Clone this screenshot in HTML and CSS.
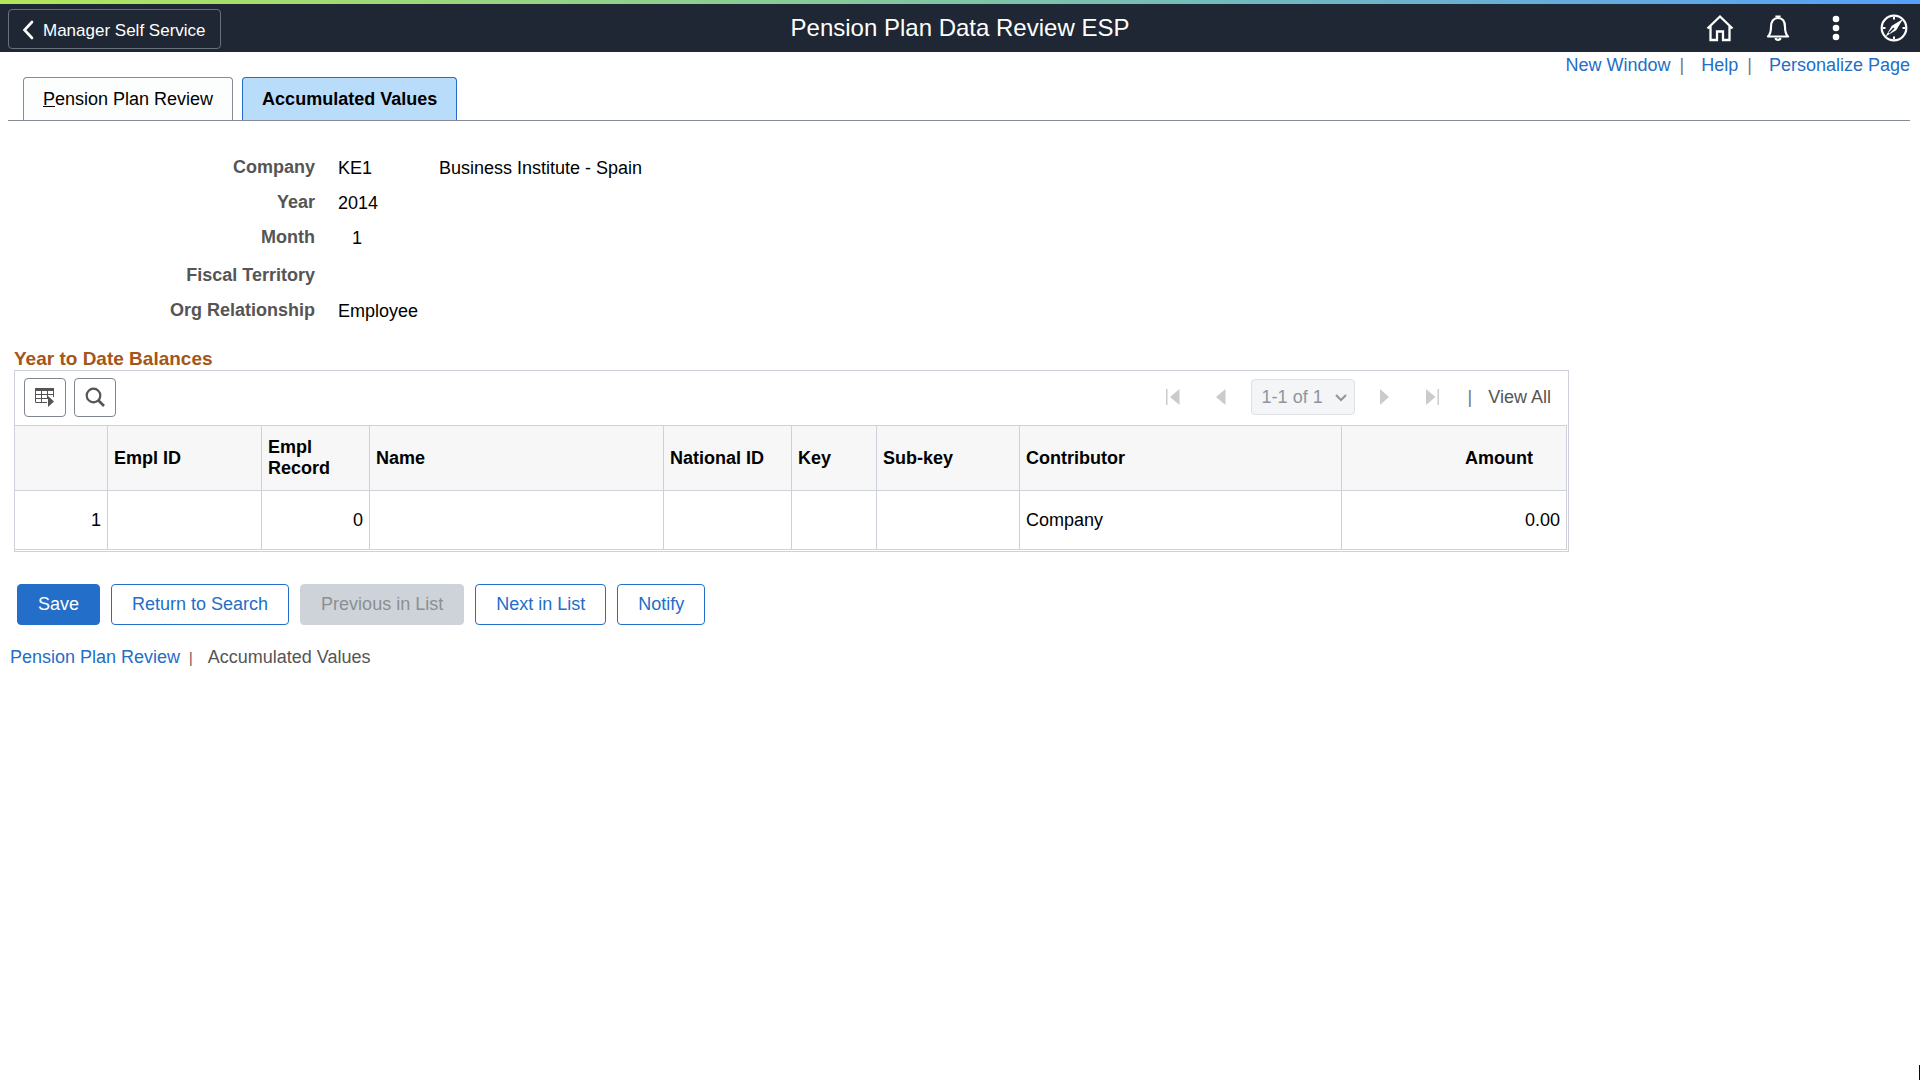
FILE: index.html
```html
<!DOCTYPE html>
<html lang="en">
<head>
    <meta charset="UTF-8">
    <meta name="viewport" content="width=device-width, initial-scale=1.0">
    <title>Pension Plan Data Review ESP</title>
    <link rel="stylesheet" href="styles.css">
</head>
<body>
    <header class="banner">
        <div class="banner-left">
            <button class="back-btn" type="button">
                <svg width="12" height="20" viewBox="0 0 12 20"><path d="M10 2 2.500 10 10 18" fill="none" stroke="#fff" stroke-width="2.600" stroke-linecap="round"/></svg>
                Manager Self Service
            </button>
        </div>
        <h1>Pension Plan Data Review ESP</h1>
        <div class="banner-icons">
            <button class="icon-btn" type="button" aria-label="Home">
                <svg width="28" height="28" viewBox="0 0 28 28" fill="none" stroke="#fff" stroke-width="2.300"><path d="M1.500 14.500 14 2.500l12.500 12M4.500 12v14h6.500v-8.500h6V26h6.500V12"/></svg>
            </button>
            <button class="icon-btn" type="button" aria-label="Notifications">
                <svg width="28" height="28" viewBox="0 0 28 28" fill="none" stroke="#fff" stroke-width="2.200"><path d="M4 22.500c2.500-2.500 3-5 3-9.500 0-5.500 2.500-9 7-9s7 3.500 7 9c0 4.500.5 7 3 9.500z" stroke-linejoin="round"/><path d="M12.500 3.500v-1h3v1M11.500 24c.5 2.500 4.500 2.500 5 0"/></svg>
            </button>
            <button class="icon-btn" type="button" aria-label="Actions">
                <svg width="28" height="28" viewBox="0 0 28 28" fill="#fff"><circle cx="14" cy="5" r="3.300"/><circle cx="14" cy="14" r="3.300"/><circle cx="14" cy="23" r="3.300"/></svg>
            </button>
            <button class="icon-btn" type="button" aria-label="Navigator">
                <svg width="28" height="28" viewBox="0 0 28 28" fill="none" stroke="#fff"><circle cx="14" cy="14" r="12.300" stroke-width="2.200"/><path d="M23 5 11.800 11.800 5.500 22.500l10.700-6.300z" fill="#fff" stroke="none"/><path d="M14 14 9 19" stroke="#1e2733" stroke-width="1.500"/><path d="M14 3v2.500M14 22.500V25M3 14h2.500M22.500 14H25" stroke-width="2"/></svg>
            </button>
        </div>
    </header>

    <nav class="page-links">
        <a href="#">New Window</a>
        <span class="bar">|</span>
        <a href="#">Help</a>
        <span class="bar">|</span>
        <a href="#">Personalize Page</a>
    </nav>

    <nav class="tabs">
        <a class="tab" href="#"><u>P</u>ension Plan Review</a>
        <a class="tab active" href="#">Accumulated Values</a>
    </nav>

    <main>
        <dl class="fields">
            <dt>Company</dt>
            <dd>KE1</dd>
            <dd>Business Institute - Spain</dd>
            <dt>Year</dt>
            <dd>2014</dd>
            <dt>Month</dt>
            <dd class="month">1</dd>
            <dt class="spaced">Fiscal Territory</dt>
            <dd class="spaced"></dd>
            <dt>Org Relationship</dt>
            <dd>Employee</dd>
        </dl>

        <h2>Year to Date Balances</h2>
        <section class="grid">
            <div class="grid-bar">
                <button class="tool-btn" type="button" aria-label="Grid actions">
                    <svg width="20" height="20" viewBox="0 0 20 20"><path d="M0 1h19v3H0z" fill="#555"/><path d="M.5 4v11.500H12M.5 7.500h18M.5 11.500H13M6.500 4v11.500M12.500 4v8M18.500 4v6" fill="none" stroke="#555"/><path d="M13 9v11l6-5.500z" fill="#555"/></svg>
                </button>
                <button class="tool-btn" type="button" aria-label="Find">
                    <svg width="20" height="20" viewBox="0 0 20 20" fill="none" stroke="#555"><circle cx="8.500" cy="8.500" r="6.800" stroke-width="2.200"/><path d="m13.500 13.500 5.500 5.500" stroke-width="2.600"/></svg>
                </button>
                <div class="pager">
                    <button class="page-btn" type="button" aria-label="First" disabled>
                        <svg width="14" height="16" viewBox="0 0 14 16"><path d="M0 0h1.500v16H0zM13.500 0v16L4 8z"/></svg>
                    </button>
                    <button class="page-btn" type="button" aria-label="Previous" disabled>
                        <svg width="10" height="16" viewBox="0 0 10 16"><path d="M9.500 0v16L0 8z"/></svg>
                    </button>
                    <div class="rows-select">
                        <select aria-label="Rows" disabled>
                            <option>1-1 of 1</option>
                        </select>
                        <svg width="12" height="8" viewBox="0 0 12 8"><path d="M1 1l5 5 5-5" fill="none" stroke="#8f959d" stroke-width="2"/></svg>
                    </div>
                    <button class="page-btn" type="button" aria-label="Next" disabled>
                        <svg width="10" height="16" viewBox="0 0 10 16"><path d="M0 0v16l9-8z"/></svg>
                    </button>
                    <button class="page-btn" type="button" aria-label="Last" disabled>
                        <svg width="14" height="16" viewBox="0 0 14 16"><path d="M0 0v16l9.500-8zM11.500 0H13v16h-1.500z"/></svg>
                    </button>
                    <span class="bar">|</span>
                    <a class="view-all" href="#">View All</a>
                </div>
            </div>
            <table>
                <colgroup>
                    <col class="c-row">
                    <col class="c-id">
                    <col class="c-record">
                    <col class="c-name">
                    <col class="c-national">
                    <col class="c-key">
                    <col class="c-subkey">
                    <col class="c-contrib">
                    <col class="c-amount">
                </colgroup>
                <thead>
                    <tr>
                        <th></th>
                        <th>Empl ID</th>
                        <th>Empl<br>Record</th>
                        <th>Name</th>
                        <th>National ID</th>
                        <th>Key</th>
                        <th>Sub-key</th>
                        <th>Contributor</th>
                        <th class="amount">Amount</th>
                    </tr>
                </thead>
                <tbody>
                    <tr>
                        <td class="num">1</td>
                        <td></td>
                        <td class="num">0</td>
                        <td></td>
                        <td></td>
                        <td></td>
                        <td></td>
                        <td>Company</td>
                        <td class="num">0.00</td>
                    </tr>
                </tbody>
            </table>
        </section>

        <div class="actions">
            <button class="btn primary" type="button">Save</button>
            <button class="btn" type="button">Return to Search</button>
            <button class="btn" type="button" disabled>Previous in List</button>
            <button class="btn" type="button">Next in List</button>
            <button class="btn" type="button">Notify</button>
        </div>

        <nav class="bottom-links">
            <a href="#">Pension Plan Review</a>
            <span class="small-bar">|</span>
            <span>Accumulated Values</span>
        </nav>
    </main>
    <div class="edge"></div>
</body>
</html>
```

FILE: styles.css
```css
* {
    box-sizing: border-box;
}
body {
    font-family: "Liberation Sans", Arial, sans-serif;
    font-size: 18px;
    line-height: 21px;
    color: #000;
    background-color: #fff;
    margin: 0;
}
button, select {
    font: inherit;
}
a {
    color: #226ec8;
    text-decoration: none;
}
svg {
    display: block;
}

/* Banner */
.banner {
    display: grid;
    grid-template-columns: 1fr auto 1fr;
    align-items: center;
    height: 52px;
    padding: 4px 8px 0;
    color: #fff;
    background: linear-gradient(to right, #b3e65a, #7fc4a4 50%, #56a0fa) top / 100% 4px no-repeat #1e2733;
}
.banner h1 {
    margin: 0;
    font-size: 24px;
    font-weight: normal;
    line-height: 28px;
}
.back-btn {
    display: flex;
    align-items: center;
    gap: 9px;
    height: 40px;
    margin-top: 2px;
    padding: 2px 14px 0 13px;
    font-size: 17px;
    color: #fff;
    background: none;
    border: 1px solid #67707d;
    border-radius: 4px;
    cursor: pointer;
}
.banner-icons {
    display: flex;
    justify-content: flex-end;
    gap: 30px;
    padding-right: 4px;
}
.icon-btn {
    padding: 0;
    background: none;
    border: none;
    cursor: pointer;
}

/* Links under the banner */
.page-links {
    display: flex;
    justify-content: flex-end;
    gap: 9px;
    padding: 3px 10px 0;
}
.page-links .bar {
    margin-right: 8px;
}
.bar {
    color: #6f7882;
}

/* Tabs */
.tabs {
    display: flex;
    gap: 9px;
    margin: 1px 10px 0 8px;
    padding-left: 15px;
    border-bottom: 1px solid #858c94;
}
.tab {
    height: 43px;
    padding: 11px 19px;
    color: #000;
    background-color: #fcfefd;
    border: 1px solid #858c94;
    border-bottom: none;
    border-radius: 4px 4px 0 0;
}
.tab.active {
    font-weight: bold;
    background-color: #badcfb;
    border-color: #226ec8;
}

main {
    padding: 36px 14px 0;
}

/* Header fields */
.fields {
    display: grid;
    grid-template-columns: 301px 78px auto;
    column-gap: 23px;
    row-gap: 14px;
    margin: 0 0 26px;
}
.fields dt {
    grid-column: 1;
    text-align: right;
    font-weight: bold;
    color: #555;
}
.fields dd {
    margin: 0;
    padding-top: 1px;
    height: 21px;
}
.fields .month {
    padding-left: 14px;
}
.fields .spaced {
    margin-top: 3px;
}

/* Balances grid */
h2 {
    margin: 0;
    font-size: 19px;
    line-height: 23px;
    color: #a55516;
}
.grid {
    width: fit-content;
    padding: 0 1px 1px 0;
    border: 1px solid #cdd2da;
}
.grid-bar {
    display: flex;
    gap: 8px;
    padding: 7px 16px 8px 9px;
}
.tool-btn {
    display: flex;
    justify-content: center;
    width: 42px;
    height: 39px;
    padding: 8px 0;
    background-color: #fff;
    border: 1px solid #7f868f;
    border-radius: 4px;
    cursor: pointer;
}
.pager {
    display: flex;
    align-items: center;
    margin-left: auto;
    height: 38px;
}
.page-btn {
    padding: 0;
    margin-right: 36px;
    background: none;
    border: none;
    fill: #c9cbcd;
}
.page-btn + .rows-select {
    margin: 0 25px 0 -11px;
}
.rows-select {
    position: relative;
}
.rows-select select {
    width: 104px;
    height: 36px;
    padding: 0 10px;
    color: #8f959d;
    background-color: #f3f5f7;
    border: 1px solid #dde0e4;
    border-radius: 4px;
    appearance: none;
    opacity: 1;
}
.rows-select svg {
    position: absolute;
    right: 8px;
    top: 15px;
}
.pager .bar {
    margin: 0 16px 0 -8px;
}
.view-all {
    color: #555;
}
table {
    table-layout: fixed;
    width: 1552px;
    border-collapse: separate;
    border-spacing: 0;
}
th, td {
    padding: 0 6px;
    text-align: left;
    border-right: 1px solid #cdd2da;
    border-bottom: 1px solid #cdd2da;
}
th {
    height: 66px;
    background-color: #f7f7f7;
    border-top: 1px solid #cdd2da;
}
td {
    height: 59px;
}
.num, .amount {
    text-align: right;
}
.amount {
    padding-right: 33px;
}
.c-row { width: 93px; }
.c-id { width: 154px; }
.c-record { width: 108px; }
.c-name { width: 294px; }
.c-national { width: 128px; }
.c-key { width: 85px; }
.c-subkey { width: 143px; }
.c-contrib { width: 322px; }
.c-amount { width: 225px; }

/* Action buttons */
.actions {
    display: flex;
    gap: 11px;
    margin: 32px 3px 22px;
}
.btn {
    height: 41px;
    padding: 0 20px;
    color: #226ec8;
    background-color: #fff;
    border: 1px solid #226ec8;
    border-radius: 4px;
    cursor: pointer;
}
.btn.primary {
    color: #fff;
    background-color: #226ec8;
}
.btn:disabled {
    color: #8b8f92;
    background-color: #ced3da;
    border-color: #ced3da;
    cursor: default;
}

.bottom-links {
    display: flex;
    align-items: baseline;
    gap: 9px;
    margin-left: -4px;
    color: #555;
}
.small-bar {
    margin-right: 6px;
    font-size: 14px;
}

/* Thin handle in the window corner */
.edge {
    position: fixed;
    right: 0;
    bottom: 0;
    width: 1px;
    height: 15px;
    background-color: #0d0420;
}
```
